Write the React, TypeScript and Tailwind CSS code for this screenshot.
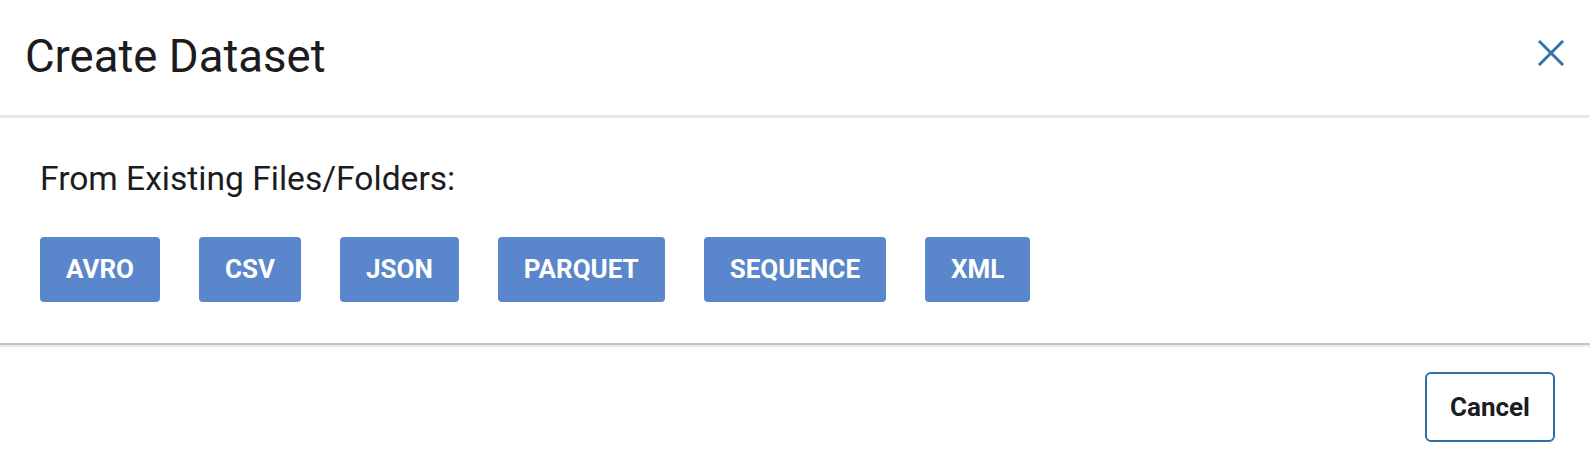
const formats = ['AVRO', 'CSV', 'JSON', 'PARQUET', 'SEQUENCE', 'XML'];

const App = () => {
  return (
    <div className="w-[1590px] h-[468px] bg-white flex flex-col font-['Roboto',_'Liberation_Sans',_sans-serif] text-[#1c1c1e]">
      <div className="h-[118px] flex items-center justify-between pl-[25px] pr-[25px] border-b-[3px] border-[#e8e8ec]">
        <h1 className="text-[45.5px] leading-none font-normal -mt-[2px]">Create Dataset</h1>
        <button className="w-[28px] h-[28px] flex items-center justify-center -mt-[9px]" aria-label="Close">
          <svg width="26" height="26" viewBox="0 0 26 26" fill="none" stroke="#3573a9" strokeWidth="3" strokeLinecap="square">
            <path d="M2 2L24 24M24 2L2 24" />
          </svg>
        </button>
      </div>

      <div className="flex-1 px-10 pt-[44px]">
        <p className="text-[33.6px] leading-none">From Existing Files/Folders:</p>
        <div className="flex gap-[39px] mt-[41px]">
          {formats.map((f) => (
            <button
              key={f}
              className="h-[65px] px-[26px] rounded-[4px] bg-[#5a86cb] text-white text-[26px] font-bold leading-none"
            >
              {f}
            </button>
          ))}
        </div>
      </div>

      <div className="border-t-2 border-[#c6c6c6]">
        <div className="h-[2px] bg-[#e9e9ee]" />
        <div className="h-[121px] flex items-start justify-end pr-[35px] pt-[25px]">
          <button className="w-[130px] h-[70px] rounded-[6px] border-2 border-[#2f6fa8] bg-white text-[26px] font-bold text-[#1c1c1e]">
            Cancel
          </button>
        </div>
      </div>
    </div>
  );
};

export default App;
